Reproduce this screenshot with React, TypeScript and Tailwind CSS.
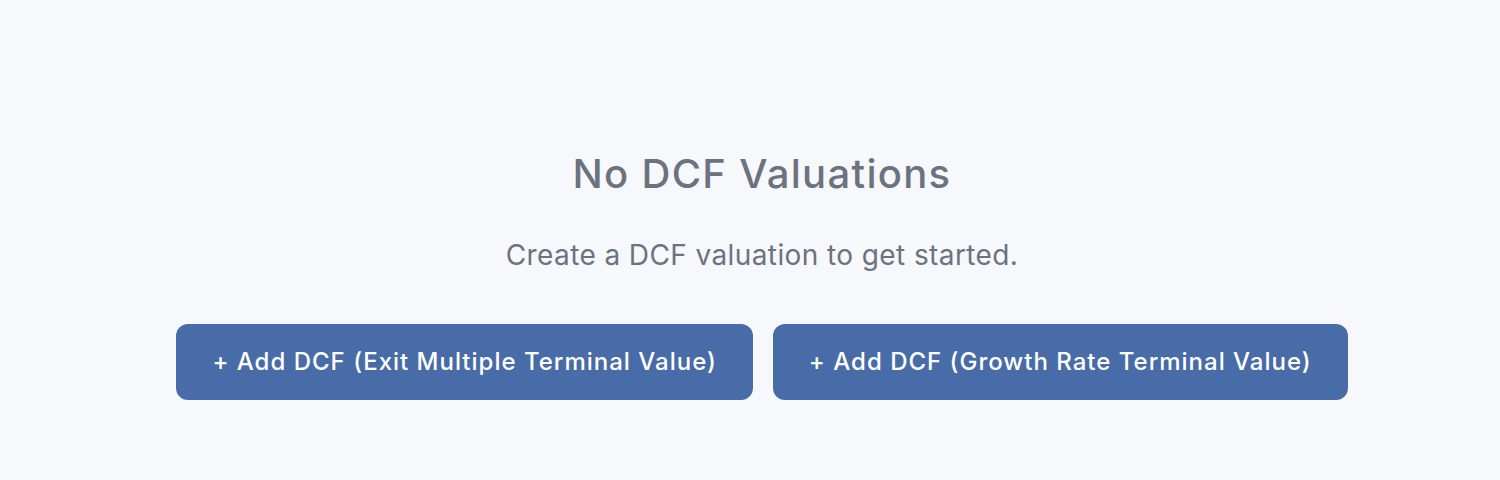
import React from 'react';

const buttons = [
  'Exit Multiple Terminal Value',
  'Growth Rate Terminal Value',
];

export default function App() {
  return (
    <div className="min-h-[480px] w-full bg-[#f7f8fc] pl-6 pt-[150px] font-['Inter',sans-serif]">
      <div className="flex flex-col items-center">
        <h2 className="text-[40px] leading-[48px] font-medium tracking-[1.3px] text-[#6b7280]">No DCF Valuations</h2>
        <p className="mt-[39px] text-[28px] leading-[36px] tracking-[0.4px] text-[#6b7280]">Create a DCF valuation to get started.</p>
        <div className="mt-[51px] flex gap-5">
          {buttons.map((label) => (
            <button
              key={label}
              className="h-[76px] rounded-xl bg-[#486ca8] px-9 text-[24px] font-medium tracking-[1px] text-white"
            >
              + Add DCF ({label})
            </button>
          ))}
        </div>
      </div>
    </div>
  );
}
